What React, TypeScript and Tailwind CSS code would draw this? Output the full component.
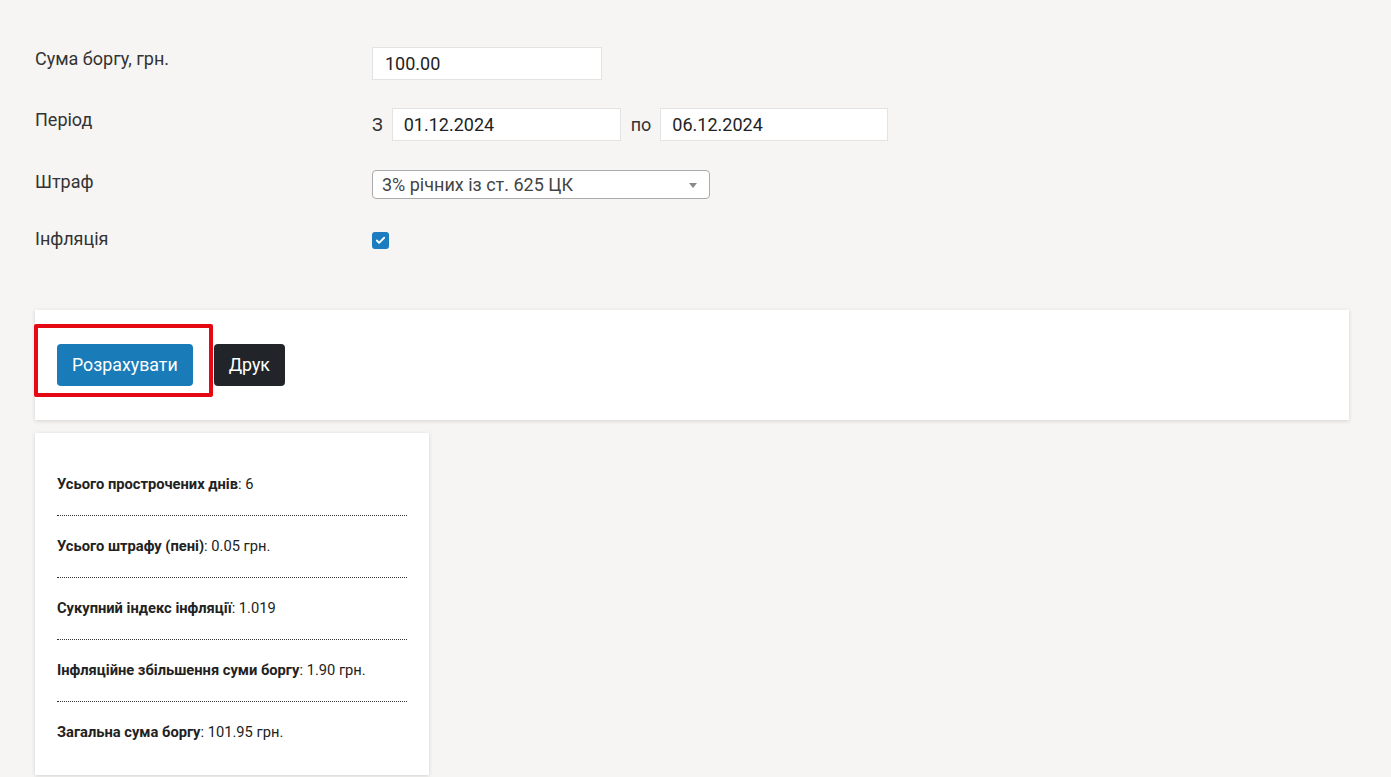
import { Check } from 'lucide-react';

const RESULTS = [
  { label: 'Усього прострочених днів', value: '6' },
  { label: 'Усього штрафу (пені)', value: '0.05 грн.' },
  { label: 'Сукупний індекс інфляції', value: '1.019' },
  { label: 'Інфляційне збільшення суми боргу', value: '1.90 грн.' },
  { label: 'Загальна сума боргу', value: '101.95 грн.' },
];

const App: React.FC = () => {
  return (
    <div className="min-h-[777px] bg-[#f6f5f3] font-['Roboto',sans-serif] text-[#333] overflow-hidden">
      <div className="pl-[35px] pr-[42px] pt-[47px]">
        {/* Form */}
        <div className="flex mb-[28px]">
          <div className="w-[337px] text-[18px] leading-[24px]">Сума боргу, грн.</div>
          <input
            defaultValue="100.00"
            className="w-[230px] h-[33px] bg-white border border-[#e3e3e3] px-[12px] text-[18px] text-[#222] outline-none"
          />
        </div>

        <div className="flex mb-[29px]">
          <div className="w-[337px] text-[18px] leading-[24px]">Період</div>
          <div className="flex items-center">
            <span className="text-[18px] mr-[9px] -mt-[1px]">З</span>
            <input
              defaultValue="01.12.2024"
              className="w-[229px] h-[33px] bg-white border border-[#e3e3e3] px-[11px] text-[18px] text-[#222] outline-none"
            />
            <span className="text-[18px] ml-[10px] mr-[9px] -mt-[1px]">по</span>
            <input
              defaultValue="06.12.2024"
              className="w-[228px] h-[33px] bg-white border border-[#e3e3e3] px-[11px] text-[18px] text-[#222] outline-none"
            />
          </div>
        </div>

        <div className="flex mb-[28px]">
          <div className="w-[337px] text-[18px] leading-[24px]">Штраф</div>
          <div className="relative w-[338px] h-[29px] bg-white border border-[#aaa] rounded-[4px] flex items-center pl-[9px] text-[18px] text-[#444]">
            3% річних із ст. 625 ЦК
            <span className="absolute right-[12px] top-[12px] w-0 h-0 border-x-[4px] border-x-transparent border-t-[5px] border-t-[#888]"></span>
          </div>
        </div>

        <div className="flex">
          <div className="w-[337px] text-[18px] leading-[24px]">Інфляція</div>
          <div className="pt-[5px]">
            <div className="w-[17px] h-[17px] rounded-[3px] bg-[#1b7cc0] flex items-center justify-center">
              <Check className="w-[11px] h-[11px] text-white" strokeWidth={4} />
            </div>
          </div>
        </div>

        {/* Actions */}
        <div className="mt-[59px] h-[110px] bg-white shadow-[0_1px_4px_rgba(0,0,0,0.14)] flex items-start pt-[34px] pl-[22px] gap-[21px]">
          <div className="relative">
            <button className="h-[42px] px-[15px] rounded-[4px] bg-[#1a7bb9] text-white text-[17.8px]">
              Розрахувати
            </button>
            <div className="absolute -left-[23px] -top-[20px] -right-[20px] -bottom-[11px] border-[4px] border-[#e50914] rounded-[2px] pointer-events-none"></div>
          </div>
          <button className="h-[42px] px-[15px] rounded-[4px] bg-[#212529] text-white text-[17.8px]">
            Друк
          </button>
        </div>

        {/* Results */}
        <div className="mt-[13px] w-[394px] bg-white shadow-[0_1px_4px_rgba(0,0,0,0.14)] px-[22px] pt-[21px] pb-[12px]">
          {RESULTS.map((item, i) => (
            <div
              key={item.label}
              className={`pt-[20px] pb-[21px] text-[14.7px] leading-[20px] text-[#222] ${
                i < RESULTS.length - 1 ? 'border-b border-dotted border-[#333]' : ''
              }`}
            >
              <span className="font-bold">{item.label}</span>: {item.value}
            </div>
          ))}
        </div>
      </div>
    </div>
  );
};

export default App;
